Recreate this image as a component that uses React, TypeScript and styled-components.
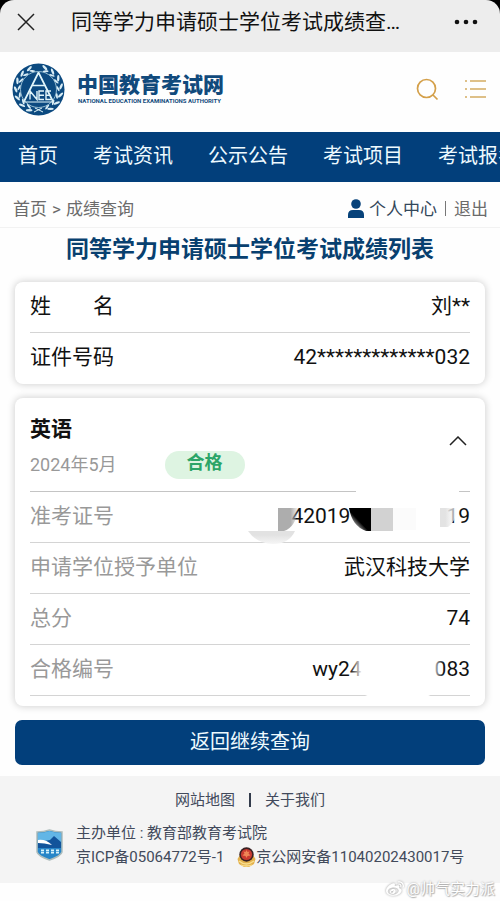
import React from "react";
import styled, { createGlobalStyle } from "styled-components";
import { FaWeibo } from "react-icons/fa";

const NAVY = "#023f7b";

const GlobalStyle = createGlobalStyle`
  * { box-sizing: border-box; }
  body {
    margin: 0;
    background: #fefefe;
    color: #111;
    font-family: Roboto, "Noto Sans CJK SC", sans-serif;
  }
  a { color: inherit; text-decoration: none; }
  button { padding: 0; border: 0; background: none; font: inherit; color: inherit; cursor: pointer; }
  svg { display: block; }
`;

const Page = styled.div`
  position: relative;
  min-height: 100vh;
  overflow: hidden;
`;

const TitleFrame = styled.div`
  background: #000;
`;

const TitleBar = styled.div`
  display: flex;
  align-items: center;
  height: 52px;
  padding: 0 22px 8px 14px;
  background: #ededed;
  border-radius: 14px 14px 0 0;
`;

const TitleText = styled.div`
  flex: 1;
  padding-left: 33px;
  font-size: 21px;
  line-height: 32px;
  white-space: nowrap;
`;

const SiteHeader = styled.header`
  display: flex;
  align-items: center;
  height: 80px;
  padding: 0 13px 6px 12px;
`;

const Brand = styled.a`
  display: flex;
  align-items: center;
  gap: 12px;
  margin-right: auto;
  color: #114a7c;
  white-space: nowrap;
`;

const BrandName = styled.div`
  font-size: 21px;
  line-height: 24px;
  font-weight: 900;
`;

const BrandSub = styled.div`
  padding-left: 1px;
  font-size: 6px;
  line-height: 8px;
  font-weight: 700;
`;

const IconButton = styled.button`
  display: flex;
  align-items: center;
  justify-content: center;
  width: 24px;
  height: 24px;
`;

const HeaderTools = styled.div`
  display: flex;
  gap: 24px;
`;

const Nav = styled.nav`
  display: flex;
  gap: 35px;
  height: 50px;
  padding: 0 18px;
  overflow: hidden;
  background: ${NAVY};
  color: #eefaff;
  font-size: 20px;
  line-height: 48px;
  white-space: nowrap;

  a { flex: none; }
`;

const CrumbBar = styled.div`
  display: flex;
  justify-content: space-between;
  align-items: center;
  height: 46px;
  padding: 8px 12px 0 13px;
  border-bottom: 1px solid #f2f2f2;
  color: #6b6b6b;
  font-size: 17px;
  line-height: 24px;
  white-space: nowrap;
`;

const Crumbs = styled.div`
  display: flex;
  gap: 5px;
`;

const UserLinks = styled.div`
  display: flex;
  align-items: center;
  gap: 8px;
`;

const UserLink = styled.a`
  display: flex;
  align-items: center;
  gap: 5px;
  color: #33475a;
`;

const Divider = styled.span`
  width: 1px;
  height: 15px;
  background: #777;
`;

const Heading = styled.h1`
  margin: 0 0 16px;
  padding-top: 6px;
  color: #08406f;
  font-size: 23px;
  line-height: 32px;
  font-weight: 700;
  text-align: center;
  white-space: nowrap;
`;

const Card = styled.section`
  margin: 0 15px 14px;
  padding: 0 15px;
  background: #fff;
  border-radius: 8px;
  box-shadow: 0 0 7px 1px rgba(0, 0, 0, 0.17);
`;

const ResultCard = styled(Card)`
  padding-bottom: 10px;
`;

const List = styled.dl`
  margin: 0;
`;

const Row = styled.div<{ $muted?: boolean; $last?: boolean }>`
  position: relative;
  display: flex;
  justify-content: space-between;
  height: 51px;
  border-bottom: ${(p) => (p.$last ? "0" : "1px solid #d4d4d4")};
  font-size: 21px;
  line-height: 48px;
  white-space: nowrap;

  dt { color: ${(p) => (p.$muted ? "#999" : "#111")}; }
  dd { margin: 0; }
`;

const MaskedValue = styled.dd<{ $gap: number }>`
  display: flex;
  gap: ${(p) => p.$gap}px;
`;

const Smudge = styled.svg`
  position: absolute;
  right: 0;
  top: -4px;
`;

const SubjectHead = styled.div`
  display: flex;
  align-items: center;
  justify-content: space-between;
  height: 94px;
  padding-bottom: 8px;
  border-bottom: 1px solid #c4c4c4;
`;

const Subject = styled.h2`
  margin: 10px 0 6px;
  font-size: 21px;
  line-height: 32px;
  font-weight: 700;
`;

const SubjectMeta = styled.div`
  display: flex;
  align-items: center;
  gap: 48px;
  color: #999;
  font-size: 18px;
  line-height: 28px;
`;

const Badge = styled.span`
  width: 80px;
  height: 28px;
  border-radius: 14px;
  background: #def4e2;
  color: #2ba568;
  font-weight: 700;
  line-height: 24px;
  text-align: center;
`;

const BackButton = styled.button`
  display: block;
  width: calc(100% - 30px);
  height: 45px;
  margin: 0 15px 11px;
  padding-bottom: 4px;
  border-radius: 7px;
  background: ${NAVY};
  color: #eefaff;
  font-size: 20px;
`;

const Footer = styled.footer`
  height: 107px;
  padding-top: 12px;
  background: #f4f4f4;
  color: #424a5b;
  font-size: 15px;
  line-height: 24px;
  white-space: nowrap;
`;

const FooterLinks = styled.div`
  display: flex;
  justify-content: center;
  align-items: center;
  gap: 14px;
  margin-bottom: 9px;
`;

const FooterBar = styled.span`
  width: 2px;
  height: 14px;
  background: #333b4b;
`;

const FooterInfo = styled.div`
  display: flex;
  align-items: center;
  gap: 13px;
  padding-left: 36px;
`;

const Records = styled.div`
  display: flex;
  align-items: center;
  gap: 13px;
`;

const PoliceRecord = styled.a`
  display: flex;
  align-items: center;
`;

const Watermark = styled.div`
  position: absolute;
  right: 5px;
  bottom: 1px;
  display: flex;
  align-items: center;
  gap: 3px;
  color: #fff;
  font-size: 15px;
  line-height: 22px;
  text-shadow: 0 0 2px #999, 1px 1px 1px #bbb;

  svg { filter: drop-shadow(0 0 1px #999); }
`;

const leaves = [20, 42, 64, 86, 108, 130, 152];

function Emblem() {
  return (
    <svg width="53" height="53" viewBox="0 0 53 53" aria-hidden="true">
      <circle cx="26.5" cy="26.5" r="26" fill="#0c4a80" />
      <g fill="#d9edf5">
        {[1, -1].map((side) =>
          leaves.map((angle) => (
            <g key={`${side}${angle}`} transform={`rotate(${side * angle} 26.5 26.5)`}>
              <ellipse cx="25" cy="3.8" rx="3.3" ry="1.2" transform={`rotate(${side * 28} 25 3.8)`} />
              <ellipse cx="27" cy="7" rx="3" ry="1" transform={`rotate(${side * -24} 27 7)`} />
            </g>
          ))
        )}
      </g>
      <circle cx="26.5" cy="26.5" r="18" fill="#0c4a80" stroke="#b7d8e5" strokeWidth="0.8" />
      <g fill="none" stroke="#e2f6fa" strokeWidth="1.7">
        <path d="M26.5 9.5 12 38.5M26.5 9.5 41 38.500M20.5 22.500h12" />
        <path d="M18 36.500V28l7 8.500V28M32 28h-5v8.500h5M27 32.200h5M39 28h-5v8.500h5M34 32.200h4.500" strokeWidth="1.4" />
        <path d="M12 39h29M22 49l8-4M31 49l-8-4" strokeWidth="1" />
      </g>
    </svg>
  );
}

function Shield() {
  return (
    <svg width="27" height="32" viewBox="0 0 27 32" aria-hidden="true">
      <path d="M1 3Q8 3 13.5 1 19 3 26 3V23Q25 27 13.5 31 2 27 1 23Z" fill="#2786c8" stroke="#aebdbc" strokeWidth="1.5" />
      <path d="M2 4Q8 4 13.5 2 19 4 25 4V13H2Z" fill="#62b6e6" />
      <path d="M2 11 8 12l6-1 4-4 7 6v6H2Z" fill="#12549b" />
      <path d="M2 11q8-1 14 5-8-2-14-2Z" fill="#fff" />
      <path d="M5 20.5h3v4H5zM10 20.5h3v4h-3zM15 20.5h3v4h-3zM20 20.5h3v4h-3z" fill="#d7f2fa" />
      <path d="M5 22.500h18" stroke="#2786c8" strokeWidth="0.6" />
    </svg>
  );
}

function PoliceBadge() {
  return (
    <svg width="19" height="21" viewBox="0 0 19 21" aria-hidden="true">
      <path d="M3 8 0.500 12 2 17l5 3h5l5-3 1.500-5L16 8Z" fill="#e3b14c" />
      <path d="M2 14q7 6 15 0M4 18q5 2 11 0" fill="none" stroke="#f9df91" strokeWidth="1.300" />
      <circle cx="9.5" cy="7.500" r="7.2" fill="#382022" />
      <circle cx="9.5" cy="7.500" r="5.6" fill="#c93a30" />
      <path d="m9.500 3 1 2 2-.5-1 2 2 2-3 .5-1 2-1-2-3-.5 2-2-1-2 2 .5Z" fill="#ef8656" />
    </svg>
  );
}

function TicketSmudge() {
  return (
    <Smudge width="225" height="60" viewBox="0 0 225 60" aria-hidden="true">
      <defs>
        <linearGradient id="grey" x1="0" x2="1">
          <stop offset="0.6" stopColor="#adadad" />
          <stop offset="1" stopColor="#adadad" stopOpacity="0" />
        </linearGradient>
        <linearGradient id="dark" x1="0.15" y1="0.85" x2="0.45" y2="0.55">
          <stop offset="0" stopColor="#000" stopOpacity="0" />
          <stop offset="1" stopColor="#000" />
        </linearGradient>
        <linearGradient id="pale" x1="0" x2="1">
          <stop offset="0.3" stopColor="#e3e3e3" />
          <stop offset="1" stopColor="#fff" stopOpacity="0.5" />
        </linearGradient>
        <linearGradient id="puff" x1="0" x2="0" y1="0" y2="1">
          <stop offset="0.3" stopColor="#e2e2e2" />
          <stop offset="1" stopColor="#f6f6f6" />
        </linearGradient>
      </defs>
      <path d="M111 0h103v6H111z" fill="#fff" />
      <path d="M3 43h47q-6 13-22 13T3 43Z" fill="url(#puff)" />
      <path d="M33 20h21q-4 20-15 23h-6z" fill="url(#grey)" />
      <path d="M104 20h22v23h-5q-14-5-17-23Z" fill="url(#dark)" />
      <path d="M126 20h22v23h-22z" fill="#d2d2d2" />
      <path d="M148 20h23v22h-23z" fill="#fbfbfb" />
      <path d="M195 20h18q-3 15-10 19h-8z" fill="url(#pale)" />
    </Smudge>
  );
}

function CodeSmudge() {
  return (
    <Smudge width="120" height="60" viewBox="0 0 120 60" aria-hidden="true">
      <defs>
        <linearGradient id="fade" x1="0" x2="1">
          <stop offset="0" stopColor="#fff" stopOpacity="0" />
          <stop offset="0.13" stopColor="#fff" />
          <stop offset="0.86" stopColor="#fff" />
          <stop offset="1" stopColor="#fff" stopOpacity="0" />
        </linearGradient>
      </defs>
      <path d="M0 12h94v36l-18 8H20L0 48z" fill="url(#fade)" />
    </Smudge>
  );
}

export default function App() {
  return (
    <>
      <GlobalStyle />
      <Page>
        <TitleFrame>
          <TitleBar>
            <IconButton aria-label="关闭">
              <svg width="20" height="20" viewBox="0 0 20 20" fill="none" stroke="#222" strokeWidth="1.5">
                <path d="m2 2 16 16M18 2 2 18" />
              </svg>
            </IconButton>
            <TitleText>同等学力申请硕士学位考试成绩查…</TitleText>
            <IconButton aria-label="更多">
              <svg width="24" height="6" viewBox="0 0 24 6" fill="#111">
                <circle cx="3" cy="3" r="2.3" /><circle cx="12" cy="3" r="2.3" /><circle cx="21" cy="3" r="2.3" />
              </svg>
            </IconButton>
          </TitleBar>
        </TitleFrame>
        <SiteHeader>
          <Brand href="#">
            <Emblem />
            <div>
              <BrandName>中国教育考试网</BrandName>
              <BrandSub>NATIONAL EDUCATION EXAMINATIONS AUTHORITY</BrandSub>
            </div>
          </Brand>
          <HeaderTools>
            <IconButton aria-label="搜索">
              <svg width="24" height="24" viewBox="0 0 24 24" fill="none" stroke="#d4a04a" strokeWidth="1.7">
                <circle cx="11.5" cy="11.5" r="9" /><path d="m18 18 4.500 4.500" />
              </svg>
            </IconButton>
            <IconButton aria-label="菜单">
              <svg width="22" height="20" viewBox="0 0 22 20" stroke="#d4ac62" strokeWidth="1.5">
                <path d="M1 2h2M6 2h16M1 10h2M6 10h16M1 18h2M6 18h16" />
              </svg>
            </IconButton>
          </HeaderTools>
        </SiteHeader>
        <Nav>
          {["首页", "考试资讯", "公示公告", "考试项目", "考试报名"].map((name) => (
            <a href="#" key={name}>{name}</a>
          ))}
        </Nav>
        <CrumbBar>
          <Crumbs><a href="#">首页</a><span>&gt;</span><a href="#">成绩查询</a></Crumbs>
          <UserLinks>
            <UserLink href="#">
              <svg width="16" height="19" viewBox="0 0 16 19" fill="#07427a" aria-hidden="true">
                <circle cx="8" cy="5" r="4.8" /><path d="M0 19v-3q0-5 5-5h6q5 0 5 5v3Z" />
              </svg>
              个人中心
            </UserLink>
            <Divider />
            <a href="#">退出</a>
          </UserLinks>
        </CrumbBar>
        <main>
          <Heading>同等学力申请硕士学位考试成绩列表</Heading>
          <Card>
            <List>
              <Row><dt>姓　　名</dt><dd>刘**</dd></Row>
              <Row $last><dt>证件号码</dt><dd>42*************032</dd></Row>
            </List>
          </Card>
          <ResultCard>
            <SubjectHead>
              <div>
                <Subject>英语</Subject>
                <SubjectMeta>2024年5月<Badge>合格</Badge></SubjectMeta>
              </div>
              <IconButton aria-label="收起" aria-expanded="true">
                <svg width="18" height="10" viewBox="0 0 18 10" fill="none" stroke="#222" strokeWidth="1.5">
                  <path d="m1 9 8-8 8 8" />
                </svg>
              </IconButton>
            </SubjectHead>
            <List>
              <Row $muted>
                <dt>准考证号</dt>
                <MaskedValue $gap={96}><span>42019</span><span>19</span></MaskedValue>
                <TicketSmudge />
              </Row>
              <Row $muted><dt>申请学位授予单位</dt><dd>武汉科技大学</dd></Row>
              <Row $muted><dt>总分</dt><dd>74</dd></Row>
              <Row $muted>
                <dt>合格编号</dt>
                <MaskedValue $gap={73}><span>wy24</span><span>083</span></MaskedValue>
                <CodeSmudge />
              </Row>
            </List>
          </ResultCard>
          <BackButton>返回继续查询</BackButton>
        </main>
        <Footer>
          <FooterLinks>
            <a href="#">网站地图</a><FooterBar /><a href="#">关于我们</a>
          </FooterLinks>
          <FooterInfo>
            <Shield />
            <div>
              <div>主办单位 : 教育部教育考试院</div>
              <Records>
                <a href="#">京ICP备05064772号-1</a>
                <PoliceRecord href="#"><PoliceBadge />京公网安备11040202430017号</PoliceRecord>
              </Records>
            </div>
          </FooterInfo>
        </Footer>
        <Watermark><FaWeibo size={18} />@帅气实力派</Watermark>
      </Page>
    </>
  );
}
